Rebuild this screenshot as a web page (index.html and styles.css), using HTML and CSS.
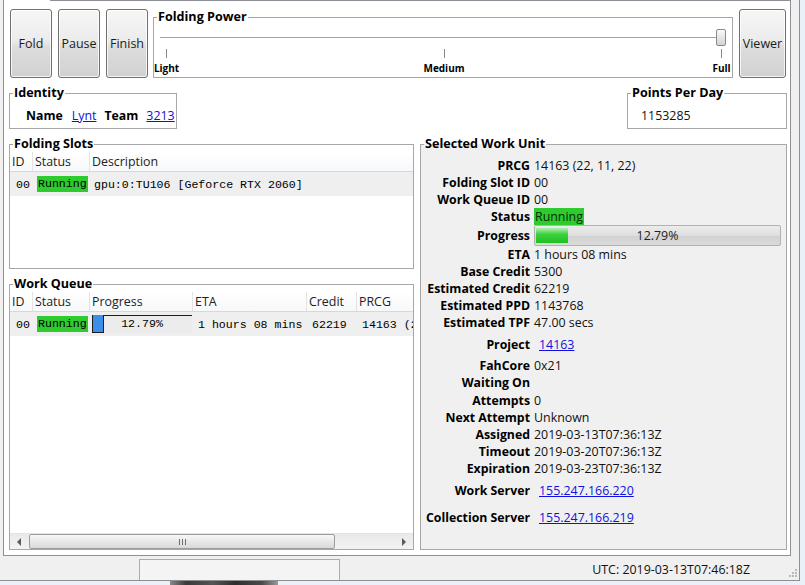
FILE: index.html
```html
<!DOCTYPE html>
<html>
<head>
<meta charset="utf-8">
<link rel="stylesheet" href="styles.css">
</head>
<body>
<div class="window">
  <div class="pane">
    <div class="toolbar">
      <button class="btn first">Fold</button>
      <button class="btn">Pause</button>
      <button class="btn last">Finish</button>
      <fieldset class="group power">
        <legend>Folding Power</legend>
        <div class="slider"><div class="groove"></div><div class="thumb"></div></div>
        <div class="ticks">
          <div class="tick"><span class="mark"></span><span class="tlabel">Light</span></div>
          <div class="tick"><span class="mark"></span><span class="tlabel">Medium</span></div>
          <div class="tick"><span class="mark"></span><span class="tlabel">Full</span></div>
        </div>
      </fieldset>
      <button class="btn viewer">Viewer</button>
    </div>

    <div class="inforow">
      <fieldset class="group identity">
        <legend>Identity</legend>
        <div class="idline">
          <span class="bold">Name</span>
          <a class="lnk lynt">Lynt</a>
          <span class="bold team">Team</span>
          <a class="lnk team-no">3213</a>
        </div>
      </fieldset>
      <fieldset class="group ppd">
        <legend>Points Per Day</legend>
        <div class="ppdval">1153285</div>
      </fieldset>
    </div>

    <div class="main">
      <div class="leftcol">
        <fieldset class="group slots">
          <legend>Folding Slots</legend>
          <div class="list">
            <div class="lhead">
              <span class="c-id">ID</span><span class="c-status">Status</span><span class="c-desc">Description</span>
            </div>
            <div class="lrow">
              <span class="c-id">00</span><span class="c-status"><span class="run">Running</span></span><span class="c-desc">gpu:0:TU106 [Geforce RTX 2060]</span>
            </div>
          </div>
        </fieldset>
        <fieldset class="group queue">
          <legend>Work Queue</legend>
          <div class="list qlist">
            <div class="lhead">
              <span class="c-id">ID</span><span class="c-status">Status</span><span class="c-prog">Progress</span><span class="c-eta">ETA</span><span class="c-credit">Credit</span><span class="c-prcg">PRCG</span>
            </div>
            <div class="lrow">
              <span class="c-id">00</span><span class="c-status"><span class="run">Running</span></span><span class="c-prog"><span class="qbar"><span class="qfill"></span><span class="qrest"></span><span class="qtext">12.79%</span></span></span><span class="c-eta">1 hours 08 mins</span><span class="c-credit">62219</span><span class="c-prcg">14163 (22, 11, 22)</span>
            </div>
            <div class="hscroll">
              <span class="sbtn"><span class="arr-l"></span></span>
              <span class="sthumb"><svg width="7" height="6" viewBox="0 0 7 6"><path d="M0.5 0v6M3.5 0v6M6.5 0v6" stroke="#6e6e6e" stroke-width="1"/></svg></span>
              <span class="strack"></span>
              <span class="sbtn"><span class="arr-r"></span></span>
            </div>
          </div>
        </fieldset>
      </div>

      <fieldset class="group wu">
        <legend>Selected Work Unit</legend>
        <div class="kv first"><span class="k">PRCG</span><span class="v">14163 (22, 11, 22)</span></div>
        <div class="kv"><span class="k">Folding Slot ID</span><span class="v">00</span></div>
        <div class="kv"><span class="k">Work Queue ID</span><span class="v">00</span></div>
        <div class="kv"><span class="k">Status</span><span class="v green">Running</span></div>
        <div class="kv prog"><span class="k">Progress</span>
          <span class="wbar"><span class="wfill"></span><span class="wtext">12.79%</span></span>
        </div>
        <div class="kv"><span class="k">ETA</span><span class="v">1 hours 08 mins</span></div>
        <div class="kv"><span class="k">Base Credit</span><span class="v">5300</span></div>
        <div class="kv"><span class="k">Estimated Credit</span><span class="v">62219</span></div>
        <div class="kv"><span class="k">Estimated PPD</span><span class="v">1143768</span></div>
        <div class="kv"><span class="k">Estimated TPF</span><span class="v">47.00 secs</span></div>
        <div class="kv gap5"><span class="k">Project</span><a class="v lnk pad">14163</a></div>
        <div class="kv gap4"><span class="k">FahCore</span><span class="v">0x21</span></div>
        <div class="kv"><span class="k">Waiting On</span><span class="v"></span></div>
        <div class="kv gap1"><span class="k">Attempts</span><span class="v">0</span></div>
        <div class="kv"><span class="k">Next Attempt</span><span class="v">Unknown</span></div>
        <div class="kv"><span class="k">Assigned</span><span class="v">2019-03-13T07:36:13Z</span></div>
        <div class="kv"><span class="k">Timeout</span><span class="v">2019-03-20T07:36:13Z</span></div>
        <div class="kv"><span class="k">Expiration</span><span class="v">2019-03-23T07:36:13Z</span></div>
        <div class="kv gap5"><span class="k">Work Server</span><a class="v lnk pad">155.247.166.220</a></div>
        <div class="kv gap10"><span class="k">Collection Server</span><a class="v lnk pad">155.247.166.219</a></div>
      </fieldset>
    </div>
  </div>

  <div class="status">
    <div class="spanel"></div>
    <div class="utc">UTC: 2019-03-13T07:46:18Z</div>
    <svg class="grip" width="11" height="11" viewBox="0 0 11 11">
      <g fill="#b9b9b9">
        <rect x="8" y="2" width="2" height="2"/>
        <rect x="5" y="5" width="2" height="2"/><rect x="8" y="5" width="2" height="2"/>
        <rect x="2" y="8" width="2" height="2"/><rect x="5" y="8" width="2" height="2"/><rect x="8" y="8" width="2" height="2"/>
      </g>
    </svg>
  </div>
</div>
<div class="smudge"></div>
</body>
</html>
```

FILE: styles.css
```css
* { box-sizing: border-box; }
html, body { margin: 0; padding: 0; }
body {
  width: 805px;
  height: 585px;
  overflow: hidden;
  background: #e9f0f8;
  font-family: "Open Sans", "Noto Sans", sans-serif;
  font-size: 12.4px;
  color: #111;
}

.window {
  width: 800px;
  height: 581px;
  background: #f0f0f0;
  border-right: 1px solid #8e8f91;
  border-bottom: 1px solid #8e8f91;
}

.pane {
  margin-left: 3px;
  width: 788px;
  height: 556px;
  border: 1px solid #8d9096;
  border-top: none;
  background: linear-gradient(#8d9096, #8d9096) 46px 0 / calc(100% - 46px) 1px no-repeat, #fff;
  padding: 9px 3px 5px 5px;
}

/* toolbar */
.toolbar { display: flex; height: 69px; }
.btn {
  width: 42px;
  height: 69px;
  margin: 0 6px 0 0;
  padding: 0;
  border: 1px solid #707070;
  border-radius: 3px;
  background: linear-gradient(#f6f6f6, #ececec 45%, #dddddd 55%, #d1d1d1);
  box-shadow: inset 0 0 0 1px rgba(255,255,255,0.75);
  font-family: "Open Sans", "Noto Sans", sans-serif;
  font-size: 12.5px;
  color: #1c1c1c;
}
.btn.first { margin-left: 1px; }
.btn.last { margin-right: 5px; }
.btn.viewer { width: 47px; margin: 0 1px 0 6px; }

/* group boxes */
.group {
  margin: 0;
  padding: 0;
  border: 1px solid #a7a7a7;
  min-width: 0;
}
.group > legend {
  margin-left: 3px;
  padding: 0 1px;
  font-weight: bold;
  font-size: 12.6px;
  line-height: 16px;
  color: #000;
}

.power { flex: 1; }
.slider {
  display: flex;
  align-items: center;
  height: 17px;
  margin: 4px 6px 0 6px;
}
.groove { flex: 1; height: 1px; background: #a3a3a3; }
.thumb {
  width: 10px;
  height: 17px;
  border: 1px solid #8a8a8a;
  border-radius: 2px;
  background: linear-gradient(#fafafa, #e6e6e6 50%, #d4d4d4);
}
.ticks {
  display: flex;
  justify-content: space-between;
  margin: 3px 10px 0 12px;
}
.tick {
  width: 1px;
  display: flex;
  flex-direction: column;
  align-items: center;
}
.mark { width: 1px; height: 9px; background: #8a8a8a; }
.tlabel {
  margin-top: 4px;
  font-size: 10px;
  line-height: 12px;
  font-weight: bold;
  color: #000;
  white-space: nowrap;
}

/* identity / ppd */
.inforow {
  display: flex;
  justify-content: space-between;
  margin-top: 7px;
  height: 44px;
}
.identity { width: 168px; }
.ppd { width: 160px; }
.idline { display: flex; line-height: 17px; white-space: nowrap; margin-top: 6px; padding-left: 16px; }
.bold { font-weight: bold; font-size: 12.3px; color: #000; }
.lynt { margin-left: 9px; }
.team { margin-left: 8px; }
.team-no { margin-left: 8px; }
.ppdval { line-height: 17px; margin-top: 6px; padding-left: 13px; }
.lnk { color: #1010e0; text-decoration: underline; }

/* main area */
.main { display: flex; margin-top: 7px; height: 414px; }
.leftcol { width: 405px; display: flex; flex-direction: column; margin-right: 6px; }
.slots { height: 133px; background: #fff; }
.queue { height: 274px; margin-top: 7px; background: #fff; }

.list { font-size: 12.4px; }
.qlist { height: 257px; display: flex; flex-direction: column; }
.lhead {
  display: flex;
  height: 20px;
  border-bottom: 1px solid #d8d8d8;
  background: linear-gradient(#ffffff, #f7f8fa);
  color: #222;
  line-height: 19px;
  white-space: nowrap;
}
.lhead > span { border-right: 1px solid #e3e3e3; padding-left: 2px; }
.lhead > span:last-child { border-right: none; }
.lrow {
  display: flex;
  align-items: center;
  height: 24px;
  background: #efefef;
  font-family: "Liberation Mono", monospace;
  font-size: 11.6px;
  color: #000;
  white-space: nowrap;
  overflow: hidden;
}
.c-id { width: 23px; flex: none; }
.c-status { width: 57px; flex: none; }
.c-desc { flex: 1; }
.c-prog { width: 103px; flex: none; }
.c-eta { width: 114px; flex: none; }
.c-credit { width: 50px; flex: none; }
.c-prcg { flex: 1; min-width: 0; overflow: hidden; }
.lrow .c-id { padding-left: 6px; }
.lrow .c-status { padding-left: 4px; }
.lrow .c-desc { padding-left: 4px; }
.lrow .c-prog { padding-left: 2px; }
.lrow .c-eta, .lrow .c-credit, .lrow .c-prcg { padding-left: 5px; }
.run {
  display: inline-block;
  height: 16px;
  line-height: 16px;
  padding: 0 1px;
  background: #2ecb2e;
}

.qbar {
  display: grid;
  grid-template-columns: 12px 1fr;
  width: 100px;
  height: 18px;
  background: #ececec;
}
.qfill {
  grid-area: 1 / 1;
  background: #3c8fe8;
  border: 1px solid #1c1c1c;
  border-top: none;
}
.qrest { grid-area: 1 / 2; border-top: 1px solid #1c1c1c; }
.qtext { grid-area: 1 / 1 / 2 / 3; text-align: center; line-height: 18px; }

.hscroll {
  margin-top: auto;
  display: flex;
  height: 16px;
  background: linear-gradient(#e9e9e9, #f3f3f3);
  border-top: 1px solid #e4e4e4;
}
.sbtn { width: 18px; display: flex; align-items: center; justify-content: center; }
.arr-l { width: 0; height: 0; border-right: 4px solid #5a5a5a; border-top: 4px solid transparent; border-bottom: 4px solid transparent; }
.arr-r { width: 0; height: 0; border-left: 4px solid #5a5a5a; border-top: 4px solid transparent; border-bottom: 4px solid transparent; }
.sthumb {
  width: 306px;
  margin-left: 1px;
  border: 1px solid #9c9c9c;
  border-radius: 2px;
  background: linear-gradient(#f7f7f7, #e8e8e8 50%, #d9d9d9);
  display: flex;
  align-items: center;
  justify-content: center;
}
.strack { flex: 1; }

/* selected work unit */
.wu { width: 367px; background: #f0f0f0; padding: 5px 0 0 0; }
.kv { display: flex; height: 17px; line-height: 17px; white-space: nowrap; }
.k {
  width: 109px;
  flex: none;
  text-align: right;
  font-weight: bold;
  font-size: 12.3px;
  color: #000;
}
.v { margin-left: 4px; }
.v.pad { margin-left: 9px; }
.v.green { background: #2ecb2e; padding: 0 1px; color: #062a06; }
.kv.prog { height: 21px; align-items: center; }
.gap1 { margin-top: 1px; }
.gap4 { margin-top: 4px; }
.gap5 { margin-top: 5px; }
.gap10 { margin-top: 10px; }

.wbar {
  display: grid;
  width: 247px;
  height: 21px;
  margin-left: 4px;
  border: 1px solid #b1b1b1;
  border-radius: 2px;
  background: linear-gradient(#ececec, #dedede 50%, #d2d2d2 55%, #dadada);
}
.wfill {
  grid-area: 1 / 1;
  justify-self: start;
  width: 32px;
  margin: 2px 0 2px 1px;
  background: linear-gradient(#b5efb5, #3fd33f 40%, #1fbf1f);
}
.wtext { grid-area: 1 / 1; text-align: center; line-height: 19px; color: #222; }

/* status bar */
.status { display: flex; height: 24px; padding: 3px 0 0 139px; }
.spanel {
  width: 201px;
  height: 21px;
  border: 1px solid #acacac;
  border-bottom: none;
  background: #f4f4f4;
}
.utc { margin-left: auto; margin-top: 2px; line-height: 17px; color: #111; }
.grip { margin: 8px 1px 0 37px; }

.smudge {
  width: 108px;
  height: 4px;
  margin-left: 170px;
  background: linear-gradient(90deg, #8a8a8a, #3a3a3a 15%, #555 40%, #2e2e2e 60%, #4a4a4a 85%, #9a9a9a);
}
```
